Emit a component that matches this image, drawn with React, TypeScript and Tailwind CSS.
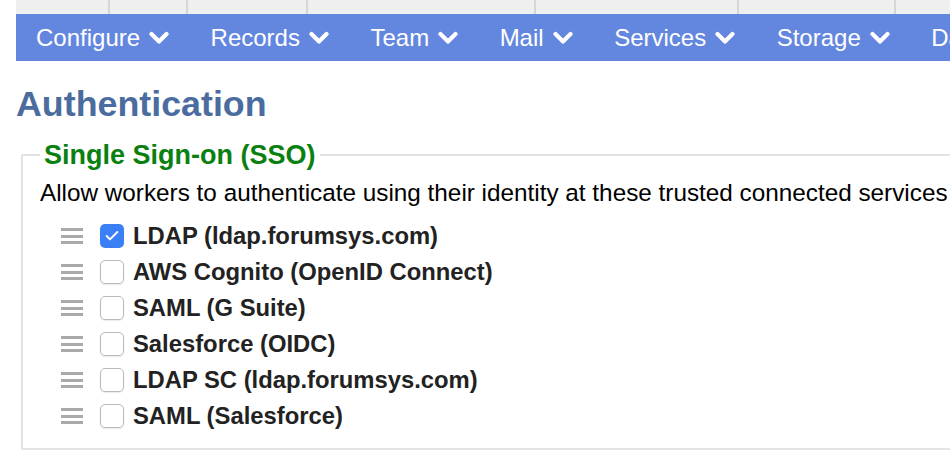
import { Check } from "lucide-react"

const navItems = ["Configure", "Records", "Team", "Mail", "Services", "Storage", "Dashboards"]

const tabWidths = ["w-[94px]", "w-[78px]", "w-[120px]", "w-[228px]", "w-[203px]", "w-[157px]"]

const providers = [
  { label: "LDAP (ldap.forumsys.com)", checked: true },
  { label: "AWS Cognito (OpenID Connect)", checked: false },
  { label: "SAML (G Suite)", checked: false },
  { label: "Salesforce (OIDC)", checked: false },
  { label: "LDAP SC (ldap.forumsys.com)", checked: false },
  { label: "SAML (Salesforce)", checked: false },
]

function Chevron() {
  return (
    <svg width="20" height="14" viewBox="0 0 20 14" className="ml-[9px] shrink-0">
      <path d="M2.5 3 L10 10.5 L17.5 3" fill="none" stroke="white" strokeWidth="4.2" strokeLinecap="round" strokeLinejoin="round" />
    </svg>
  )
}

function DragHandle() {
  return (
    <div className="flex w-[22px] flex-col gap-[3.5px]">
      <div className="h-[3px] bg-[#a9a9a9]" />
      <div className="h-[3px] bg-[#a9a9a9]" />
      <div className="h-[3px] bg-[#a9a9a9]" />
    </div>
  )
}

function Checkbox({ checked }: { checked: boolean }) {
  if (checked) {
    return (
      <div className="flex size-[24px] items-center justify-center rounded-[5px] bg-[#3a7ff6]">
        <Check className="size-[16px] text-white" strokeWidth={3} />
      </div>
    )
  }
  return <div className="size-[24px] rounded-[5px] border border-[#b9b9b9] bg-white shadow-[0_1px_1px_rgba(0,0,0,0.08)]" />
}

export default function App() {
  return (
    <div className="h-[464px] w-[950px] overflow-hidden bg-white font-['Liberation_Sans',Arial,sans-serif]">
      <div className="ml-[16px]">
        <div className="flex h-[14px] bg-[#efefef]">
          {tabWidths.map((w, i) => (
            <div key={i} className={`${w} shrink-0 border-r-2 border-[#d6d6d6]`} />
          ))}
        </div>
        <nav className="flex h-[47px] items-center gap-[41.5px] whitespace-nowrap bg-[#6387df] pl-[20px] text-[24px] text-white">
          {navItems.map((item) => (
            <div key={item} className="flex items-center">
              <span>{item}</span>
              <Chevron />
            </div>
          ))}
        </nav>
      </div>

      <h1 className="ml-[16px] mt-[22px] text-[35.8px] leading-[43px] font-bold text-[#4a6c9e]">Authentication</h1>

      <fieldset className="ml-[21px] mt-[13px] w-[1000px] border-2 border-[#e4e4e4] pb-[14px] pl-[17px]">
        <legend className="px-[4px] text-[27px] leading-[32px] font-bold text-[#0a8010]">Single Sign-on (SSO)</legend>
        <p className="mt-[8px] text-[24.3px] leading-[28px] whitespace-nowrap text-black">
          Allow workers to authenticate using their identity at these trusted connected services
        </p>
        <div className="mt-[11px] flex flex-col">
          {providers.map((p) => (
            <div key={p.label} className="flex h-[36px] items-center pl-[21px]">
              <DragHandle />
              <div className="ml-[17px]">
                <Checkbox checked={p.checked} />
              </div>
              <span className="ml-[9px] text-[23.8px] font-bold text-[#222]">{p.label}</span>
            </div>
          ))}
        </div>
      </fieldset>
    </div>
  )
}
